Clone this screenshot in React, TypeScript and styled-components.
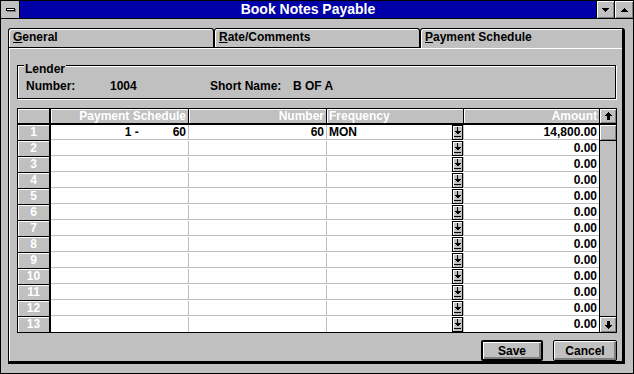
import React from 'react';
import styled, { createGlobalStyle } from 'styled-components';

const GlobalStyle = createGlobalStyle`
  html, body {
    margin: 0;
    padding: 0;
    background: #c0c0c0;
  }
  body {
    font-family: "Liberation Sans", Arial, sans-serif;
    font-size: 12px;
    font-weight: bold;
    color: #000;
  }
`;

const GRAY = '#c0c0c0';
const DARK = '#808080';

const Window = styled.div`
  width: 634px;
  height: 374px;
  box-sizing: border-box;
  border: 1px solid #000;
  background: ${GRAY};
  display: flex;
  flex-direction: column;
`;

const TitleBar = styled.div`
  display: flex;
  height: 18px;
  box-sizing: border-box;
  border-bottom: 1px solid #000;
`;

const SysBox = styled.div`
  width: 18px;
  border-right: 1px solid #000;
  background: ${GRAY};
  display: flex;
  align-items: center;
  justify-content: center;
`;

const SysDash = styled.span`
  width: 9px;
  height: 3px;
  box-sizing: border-box;
  border: 1px solid #000;
  background: #fff;
  box-shadow: 1px 1px 0 ${DARK};
`;

const Title = styled.div`
  flex: 1;
  background: #0000a8;
  color: #fff;
  font-size: 14px;
  line-height: 17px;
  text-align: center;
`;

const SizeButton = styled.div<{ $w: number }>`
  width: ${(p) => p.$w}px;
  border-left: 1px solid #000;
  background: ${GRAY};
  box-shadow: inset 1px 1px #fff, inset -1px -1px ${DARK};
  display: flex;
  align-items: center;
  justify-content: center;
`;

const Body = styled.div`
  flex: 1;
  display: flex;
  flex-direction: column;
  padding: 9px 8px 9px 7px;
`;

const TabRow = styled.div`
  display: flex;
  height: 19px;
  position: relative;
  z-index: 1;
`;

const Tab = styled.div<{ $w: number; $active?: boolean }>`
  width: ${(p) => p.$w}px;
  box-sizing: border-box;
  height: ${(p) => (p.$active ? 20 : 19)}px;
  border-top: 1px solid #000;
  border-left: 1px solid #000;
  border-right: ${(p) => (p.$active ? '3px' : '1px')} solid #000;
  border-radius: 3px 3px 0 0;
  background: ${GRAY};
  box-shadow: inset 1px 1px #fff;
  padding-left: 4px;
  line-height: 17px;
  font-weight: bold;
  color: #000;
`;

const Panel = styled.div`
  flex: 1;
  box-sizing: border-box;
  border: 1px solid #000;
  border-right-width: 3px;
  border-bottom-width: 3px;
  box-shadow: inset 1px 1px #fff;
  padding: 17px 5px 0 8px;
  display: flex;
  flex-direction: column;
`;

const GroupBox = styled.div`
  position: relative;
  width: 599px;
  height: 34px;
  box-sizing: border-box;
  border: 1px solid #000;
  box-shadow: inset 1px 1px #fff, 1px 1px #fff;
  padding: 13px 0 0 8px;
  display: grid;
  grid-template-columns: 84px 100px 83px auto;
  line-height: 14px;
`;

const Legend = styled.span`
  position: absolute;
  top: -4px;
  left: 6px;
  padding: 0 1px;
  background: ${GRAY};
  line-height: 14px;
`;

const GridFrame = styled.div`
  margin-top: 9px;
  height: 225px;
  box-sizing: border-box;
  border: 1px solid #000;
  display: flex;
`;

const Table = styled.div`
  flex: 1;
  display: flex;
  flex-direction: column;
  background: #fff;
`;

const Row = styled.div`
  display: flex;
`;

const HeadCell = styled.div<{ $w: number; $align?: string; $sep?: number }>`
  width: ${(p) => p.$w}px;
  height: 14px;
  border-bottom: 2px solid #000;
  border-right: ${(p) => p.$sep ?? 1}px solid #000;
  background: ${GRAY};
  box-shadow: inset 1px 1px #fff;
  color: #fff;
  line-height: 14px;
  text-align: ${(p) => p.$align ?? 'right'};
  padding: 0 2px;
  overflow: hidden;
  white-space: nowrap;
`;

const RowHead = styled.div<{ $last?: boolean }>`
  width: 31px;
  height: 15px;
  border-right: 2px solid #000;
  border-bottom: ${(p) => (p.$last ? 'none' : '1px solid #000')};
  background: ${GRAY};
  box-shadow: inset 1px 1px #fff;
  color: #fff;
  text-align: center;
  line-height: 15px;
`;

const Cell = styled.div<{ $w: number; $align?: string; $last?: boolean; $sep?: boolean }>`
  width: ${(p) => p.$w}px;
  height: 15px;
  box-sizing: border-box;
  border-bottom: ${(p) => (p.$last ? 'none' : `1px solid ${GRAY}`)};
  border-right: ${(p) => (p.$sep === false ? 'none' : `1px solid ${GRAY}`)};
  text-align: ${(p) => p.$align ?? 'right'};
  line-height: 15px;
  padding: 0 2px;
  white-space: nowrap;
`;

const RangeCell = styled(Cell)`
  display: flex;
  justify-content: flex-end;
  gap: 34px;
`;

const FreqCell = styled(Cell)`
  display: flex;
  justify-content: space-between;
  padding: 0 0 0 2px;
`;

const DropButton = styled.div`
  width: 11px;
  height: 15px;
  box-sizing: border-box;
  border: 1px solid #000;
  background: ${GRAY};
  box-shadow: inset 1px 1px #fff;
  display: flex;
  align-items: center;
  justify-content: center;
`;

const ScrollBar = styled.div`
  width: 16px;
  border-left: 1px solid #000;
  display: flex;
  flex-direction: column;
  background: ${GRAY};
`;

const ScrollBtn = styled.div<{ $h: number; $top?: boolean }>`
  height: ${(p) => p.$h}px;
  border-bottom: ${(p) => (p.$top ? '2px solid #000' : 'none')};
  border-top: ${(p) => (p.$top ? 'none' : '1px solid #000')};
  background: ${GRAY};
  box-shadow: inset 1px 1px #fff, inset -1px -1px ${DARK};
  display: flex;
  align-items: center;
  justify-content: center;
`;

const Thumb = styled.div`
  height: 15px;
  border-bottom: 1px solid #000;
  background: ${GRAY};
  box-shadow: inset 1px 1px #fff, inset -1px -1px ${DARK};
`;

const Track = styled.div`
  flex: 1;
`;

const ButtonRow = styled.div`
  display: flex;
  justify-content: flex-end;
  gap: 10px;
  margin-top: 7px;
`;

const PushButton = styled.button<{ $w: number; $default?: boolean }>`
  width: ${(p) => p.$w}px;
  height: 21px;
  box-sizing: border-box;
  border: ${(p) => (p.$default ? 2 : 1)}px solid #000;
  border-radius: 2px;
  background: ${GRAY};
  box-shadow: inset 1px 1px #fff, inset -2px -2px ${DARK};
  font-family: inherit;
  font-size: 12px;
  font-weight: bold;
  color: #000;
  padding: 0;
`;

const TriangleIcon = ({ up }: { up?: boolean }) => (
  <svg width="7" height="4" viewBox="0 0 7 4" shapeRendering="crispEdges">
    <polygon points={up ? '3.5,0 7,4 0,4' : '0,0 7,0 3.5,4'} fill="#000" />
  </svg>
);

const ArrowIcon = ({ up }: { up?: boolean }) => (
  <svg width="7" height="8" viewBox="0 0 7 8" shapeRendering="crispEdges">
    {up ? (
      <>
        <polygon points="3.5,0 7,4 0,4" fill="#000" />
        <rect x="2" y="4" width="3" height="4" fill="#000" />
      </>
    ) : (
      <>
        <rect x="2" y="0" width="3" height="4" fill="#000" />
        <polygon points="0,4 7,4 3.5,8" fill="#000" />
      </>
    )}
  </svg>
);

const DropIcon = () => (
  <svg width="7" height="11" viewBox="0 0 7 11" shapeRendering="crispEdges">
    <rect x="3" y="0" width="1" height="5" fill="#000" />
    <polygon points="0,4 7,4 3.5,7.5" fill="#000" />
    <rect x="0" y="9" width="7" height="1" fill="#000" />
  </svg>
);

const rows = Array.from({ length: 13 }, (_, i) => i + 1);

export default function App() {
  return (
    <>
      <GlobalStyle />
      <Window>
        <TitleBar>
          <SysBox>
            <SysDash />
          </SysBox>
          <Title>Book Notes Payable</Title>
          <SizeButton $w={17}>
            <TriangleIcon />
          </SizeButton>
          <SizeButton $w={18}>
            <TriangleIcon up />
          </SizeButton>
        </TitleBar>

        <Body>
          <TabRow>
            <Tab $w={206}>
              <u>G</u>eneral
            </Tab>
            <Tab $w={206}>
              <u>R</u>ate/Comments
            </Tab>
            <Tab $w={205} $active>
              <u>P</u>ayment Schedule
            </Tab>
          </TabRow>

          <Panel>
            <GroupBox>
              <Legend>Lender</Legend>
              <span>Number:</span>
              <span>1004</span>
              <span>Short Name:</span>
              <span>B OF A</span>
            </GroupBox>

            <GridFrame>
              <Table>
                <Row>
                  <HeadCell $w={27} $sep={2} />
                  <HeadCell $w={133}>Payment Schedule</HeadCell>
                  <HeadCell $w={133}>Number</HeadCell>
                  <HeadCell $w={132} $align="left">
                    Frequency
                  </HeadCell>
                  <HeadCell $w={131} $sep={0}>
                    Amount
                  </HeadCell>
                </Row>
                {rows.map((n) => {
                  const last = n === rows.length;
                  const first = n === 1;
                  return (
                    <Row key={n}>
                      <RowHead $last={last}>{n}</RowHead>
                      {first ? (
                        <RangeCell $w={138} $last={last}>
                          <span>1 -</span>
                          <span>60</span>
                        </RangeCell>
                      ) : (
                        <Cell $w={138} $last={last} />
                      )}
                      <Cell $w={138} $last={last}>
                        {first ? '60' : ''}
                      </Cell>
                      <FreqCell $w={137} $last={last}>
                        <span>{first ? 'MON' : ''}</span>
                        <DropButton>
                          <DropIcon />
                        </DropButton>
                      </FreqCell>
                      <Cell $w={135} $last={last} $sep={false}>
                        {first ? '14,800.00' : '0.00'}
                      </Cell>
                    </Row>
                  );
                })}
              </Table>
              <ScrollBar>
                <ScrollBtn $h={14} $top>
                  <ArrowIcon up />
                </ScrollBtn>
                <Thumb />
                <Track />
                <ScrollBtn $h={15}>
                  <ArrowIcon />
                </ScrollBtn>
              </ScrollBar>
            </GridFrame>

            <ButtonRow>
              <PushButton $w={62} $default>
                Save
              </PushButton>
              <PushButton $w={64}>Cancel</PushButton>
            </ButtonRow>
          </Panel>
        </Body>
      </Window>
    </>
  );
}
